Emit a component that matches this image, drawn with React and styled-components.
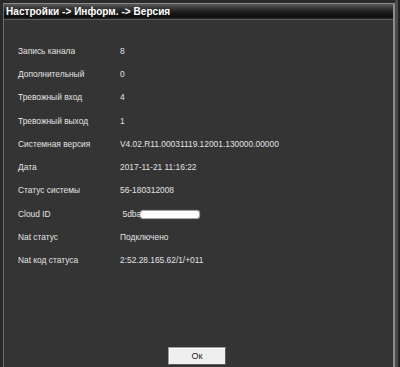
import React from "react";
import styled, { createGlobalStyle } from "styled-components";

const Global = createGlobalStyle`
  html, body { margin: 0; padding: 0; background: #262626; }
  body { font-family: "Liberation Sans", Arial, sans-serif; }
`;

const Frame = styled.div`
  width: 400px;
  height: 367px;
  box-sizing: border-box;
  padding: 3px 5px 0 3px;
  background: linear-gradient(to right, #2a2a2a 0, #2a2a2a 395px, #4a4a4a 395px, #4a4a4a 398px, #222 398px);
  background-color: #2a2a2a;
  display: flex;
`;

const Panel = styled.div`
  flex: 1;
  display: flex;
  flex-direction: column;
  background: #343434;
  border-top: 1px solid #8a8a8a;
  border-left: 1px solid #6c6c6c;
  border-right: 2px solid #8c8c8c;
`;

const TitleBar = styled.div`
  height: 15px;
  display: flex;
  align-items: center;
  padding-left: 2px;
  background: linear-gradient(#5a5a5a 0%, #3a3a3a 25%, #1c1c1c 55%, #0e0e0e 85%, #262626 100%);
  border-bottom: 1px solid #5c5c5c;
`;

const Title = styled.span`
  color: #ffffff;
  font-weight: bold;
  font-size: 10px;
  letter-spacing: 0.05px;
  white-space: nowrap;
`;

const Body = styled.div`
  flex: 1;
  display: flex;
  flex-direction: column;
  padding: 19px 0 0 14px;
`;

const List = styled.div`
  display: flex;
  flex-direction: column;
`;

const Row = styled.div`
  height: 23.3px;
  display: flex;
  align-items: center;
  font-size: 8.4px;
  color: #e2e2e2;
`;

const Label = styled.span`
  width: 102px;
  white-space: nowrap;
`;

const Value = styled.span`
  white-space: nowrap;
  display: flex;
  align-items: center;
  padding-left: ${(p) => (p.$shift ? "2.5px" : "0")};
`;

const Redact = styled.span`
  display: inline-block;
  width: 58px;
  height: 7px;
  margin-left: 0px;
  margin-top: 2px;
  background: #ffffff;
  border-radius: 2px;
  box-shadow: 0 0 1px 1px rgba(255, 255, 255, 0.6);
`;

const Footer = styled.div`
  margin-top: auto;
  display: flex;
  justify-content: flex-start;
  padding: 0 0 2px 150px;
`;

const OkButton = styled.button`
  width: 58px;
  height: 18px;
  padding: 0;
  font-family: "Liberation Sans", Arial, sans-serif;
  font-size: 9px;
  color: #222;
  background: #efefef;
  border: 1px solid #9a9a9a;
  border-right-color: #5a5a5a;
  border-bottom-color: #5a5a5a;
  box-shadow: inset 1px 1px 0 #fff;
`;

const rows = [
  ["Запись канала", "8"],
  ["Дополнительный", "0"],
  ["Тревожный вход", "4"],
  ["Тревожный выход", "1"],
  ["Системная версия", "V4.02.R11.00031119.12001.130000.00000"],
  ["Дата", "2017-11-21 11:16:22"],
  ["Статус системы", "56-180312008"],
  ["Cloud ID", "cloud"],
  ["Nat статус", "Подключено"],
  ["Nat код статуса", "2:52.28.165.62/1/+011"],
];

export default function App() {
  return (
    <>
      <Global />
      <Frame>
        <Panel>
          <TitleBar>
            <Title>Настройки -&gt; Информ. -&gt; Версия</Title>
          </TitleBar>
          <Body>
            <List>
              {rows.map(([l, v]) => (
                <Row key={l}>
                  <Label>{l}</Label>
                  {v === "cloud" ? (
                    <Value $shift>
                      5dba
                      <Redact />
                    </Value>
                  ) : (
                    <Value>{v}</Value>
                  )}
                </Row>
              ))}
            </List>
            <Footer>
              <OkButton>Ок</OkButton>
            </Footer>
          </Body>
        </Panel>
      </Frame>
    </>
  );
}
